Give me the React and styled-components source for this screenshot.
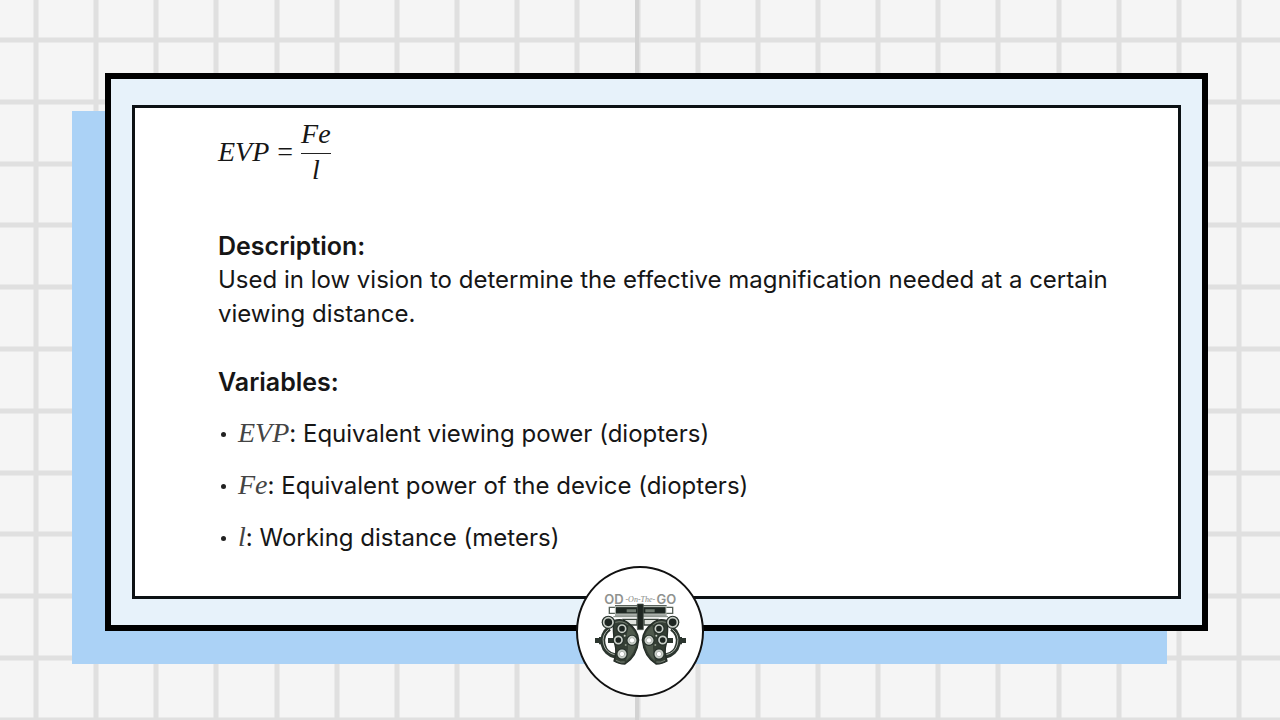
import React from "react";
import styled, { createGlobalStyle } from "styled-components";

const GlobalStyle = createGlobalStyle`
  *, *::before, *::after { box-sizing: border-box; }
  body {
    margin: 0;
    background: #f5f5f5;
    color: #161616;
    font-family: Inter, "Liberation Sans", sans-serif;
    font-feature-settings: "calt" 0;
  }
`;

const Slide = styled.main`
  position: relative;
  isolation: isolate;
  overflow: hidden;
  display: flex;
  flex-direction: column;
  min-height: 100vh;
  padding-top: 73px;
  padding-bottom: 20px;
`;

const GridPaper = styled.svg`
  position: absolute;
  inset: 0;
  z-index: -2;
  width: 100%;
  height: 100%;
`;

const Frame = styled.article`
  position: relative;
  margin: 0 72px 0 105px;
  border: 6px solid #000;

  &::before {
    content: "";
    position: absolute;
    z-index: -1;
    top: 32px;
    right: 35px;
    bottom: -39px;
    left: -39px;
    background: #abd2f6;
  }
`;

const FrameFill = styled.div`
  padding: 26px 21px;
  background: #e7f2fa;
`;

const Sheet = styled.div`
  padding: 9px 64px 41px 83px;
  border: 3px solid #0c1114;
  background: #fff;
  font-size: 24px;
  line-height: 34px;
`;

const Formula = styled.div`
  display: flex;
  align-items: center;
  gap: 8px;
  height: 70px;
  margin-bottom: 42px;
  font-family: "Liberation Serif", serif;
  font-size: 28px;
  line-height: 32px;
`;

const Fraction = styled.span`
  display: flex;
  flex-direction: column;
  text-align: center;
`;

const Numerator = styled.span`
  padding-bottom: 3px;
  border-bottom: 1px solid #222;
`;

const Variable = styled.var`
  font-family: "Liberation Serif", serif;
  font-size: 28px;
  font-style: italic;
  color: ${(p) => (p.$soft ? "#444" : "inherit")};
  line-height: ${(p) => (p.$soft ? "28px" : "inherit")};
`;

const Heading = styled.h2`
  margin: 0;
  font-size: 25px;
  font-weight: 600;
  line-height: 34px;
`;

const Paragraph = styled.p`
  margin: 0 0 34px;
`;

const VariableList = styled.ul`
  display: flex;
  flex-direction: column;
  gap: 18px;
  margin: 18px 0 0;
  padding: 0;
  list-style: none;
`;

const VariableItem = styled.li`
  display: flex;
  align-items: center;
  gap: 12px;
  height: 34px;

  &::before {
    content: "";
    width: 5px;
    height: 5px;
    margin-left: 3px;
    border-radius: 50%;
    background: #222;
  }
`;

const Badge = styled.div`
  position: relative;
  align-self: center;
  width: 128px;
  height: 131px;
  margin-top: -65px;
  border: 2px solid #111;
  border-radius: 50%;
  background: #fff;

  svg {
    display: block;
    width: 100%;
    height: 100%;
  }
`;

const columns = Array.from({ length: 21 }, (_, i) => Math.round(36 + (i * 1203) / 20));
const rows = Array.from({ length: 12 }, (_, i) => Math.round(40 + (i * 618) / 10));

const variables = [
  { symbol: "EVP", meaning: "Equivalent viewing power (diopters)" },
  { symbol: "Fe", meaning: "Equivalent power of the device (diopters)" },
  { symbol: "l", meaning: "Working distance (meters)" },
];

function Lens({ x, y, open, r = 14 }) {
  return (
    <g>
      <circle cx={x} cy={y} r={r + 3} fill="#26302a" />
      <circle cx={x} cy={y} r={r - 3} fill={open ? "#fff" : "#1d2521"} stroke="#c9cfc8" strokeWidth="5" />
      {open && <circle cx={x} cy={y} r={r - 6} fill="#fff" stroke="#8b938b" strokeWidth="2" />}
    </g>
  );
}

function PhoropterHalf() {
  return (
    <g>
      <path d="M118 205A46 46 0 0 0 136 288" fill="none" stroke="#2c362f" strokeWidth="15" />
      <path d="M116 208A43 43 0 0 0 134 284" fill="none" stroke="#a9b1a8" strokeWidth="3" />
      <path d="M75 234h12v-3h8v22h-8v-4H75z" fill="#2c362f" />
      <path d="M114 234h20v15h-20z" fill="#2c362f" />
      <path d="M160 178h41v17h-30z" fill="#dfe3de" stroke="#39433b" strokeWidth="4" />
      <path
        d="M131 182Q158 173 176 190Q203 209 206 240Q201 290 165 312Q145 312 132 303Q142 277 134 250Q128 213 131 182Z"
        fill="#343e34"
        stroke="#242c27"
        strokeWidth="4"
      />
      <path d="M176 196Q198 214 200 240Q196 281 168 303Q179 266 170 226Z" fill="#4f5a4d" />
      <path d="M136 187Q158 181 173 194M138 301Q151 309 164 306" fill="none" stroke="#98a195" strokeWidth="2" />
      <circle cx="164" cy="227" r="3" fill="#cdd3ca" />
      <circle cx="167" cy="255" r="3" fill="#8d978a" />
      <Lens x={156} y={206} />
      <Lens x={145} y={240} />
      <Lens x={186} y={241} open />
      <Lens x={156} y={282} open />
      <Lens x={115} y={187} r={17} />
    </g>
  );
}

function Logo() {
  return (
    <svg viewBox="24 24 372 381" role="img" aria-label="OD On The Go">
      <g fontFamily="Inter, sans-serif" fontSize="39" fontWeight="600" fill="#8f928f">
        <text x="103" y="131">OD</text>
        <text x="319" y="131" textAnchor="end">GO</text>
      </g>
      <text
        x="211"
        y="127"
        textAnchor="middle"
        fontFamily="'Liberation Serif', serif"
        fontStyle="italic"
        fontSize="24"
        fill="#858885"
      >
        -On-The-
      </text>
      <path d="M118 142h190v18H118z" fill="#fff" stroke="#556057" strokeWidth="4" />
      <path d="M135 137h155M135 165h155" stroke="#3b453d" strokeWidth="3" />
      <path d="M136 140h152v22H136z" fill="#1f2823" stroke="#b9c0b8" strokeWidth="3" />
      <path d="M170 148h28v9h-28zM226 148h28v9h-28z" fill="#6f7a70" />
      <path d="M130 170h164" stroke="#7b857c" strokeWidth="3" />
      <PhoropterHalf />
      <g transform="translate(423 0) scale(-1 1)">
        <PhoropterHalf />
      </g>
      <path d="M202 132h18v77h-18z" fill="#1f2722" stroke="#4d574f" strokeWidth="2" />
    </svg>
  );
}

export default function App() {
  return (
    <>
      <GlobalStyle />
      <Slide>
        <GridPaper viewBox="0 0 1280 720" preserveAspectRatio="xMidYMid slice" aria-hidden="true">
          <g stroke="#e0e0e0" strokeWidth="5">
            {rows.map((y) => (
              <line key={y} x1="0" x2="1280" y1={y} y2={y} />
            ))}
            {columns.map((x) => (
              <line key={x} x1={x} x2={x} y1="0" y2="720" />
            ))}
          </g>
          <line x1="637" x2="637" y1="0" y2="720" stroke="#d3d3d3" strokeWidth="4" />
        </GridPaper>
        <Frame>
          <FrameFill>
            <Sheet>
              <Formula>
                <Variable>EVP</Variable>
                <span>=</span>
                <Fraction>
                  <Numerator>
                    <Variable>Fe</Variable>
                  </Numerator>
                  <Variable>l</Variable>
                </Fraction>
              </Formula>
              <Heading>Description:</Heading>
              <Paragraph>
                Used in low vision to determine the effective magnification needed at a certain
                viewing distance.
              </Paragraph>
              <Heading>Variables:</Heading>
              <VariableList>
                {variables.map(({ symbol, meaning }) => (
                  <VariableItem key={symbol}>
                    <span>
                      <Variable $soft>{symbol}</Variable>: {meaning}
                    </span>
                  </VariableItem>
                ))}
              </VariableList>
            </Sheet>
          </FrameFill>
        </Frame>
        <Badge>
          <Logo />
        </Badge>
      </Slide>
    </>
  );
}
